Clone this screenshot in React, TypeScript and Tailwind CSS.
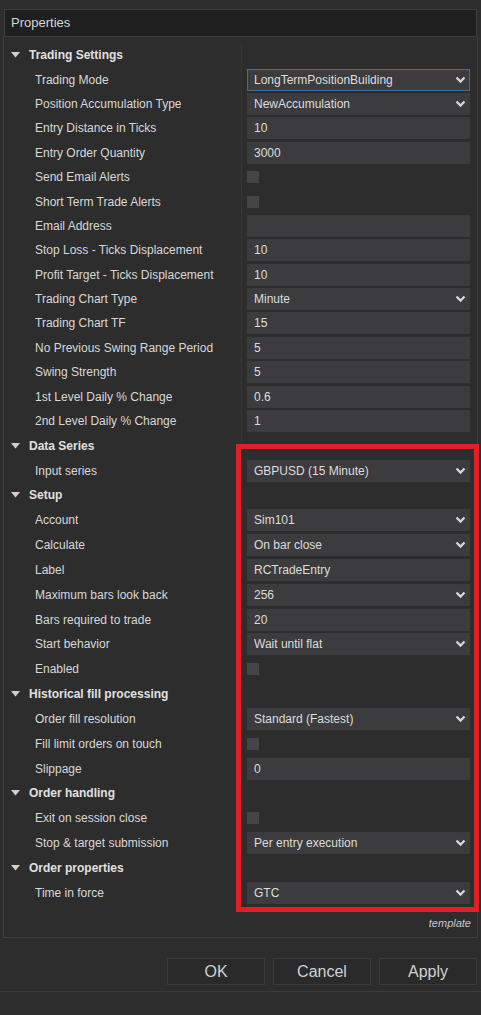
import React from "react";

type Row =
  | { kind: "section"; title: string }
  | { kind: "select"; label: string; value: string; focused?: boolean }
  | { kind: "text"; label: string; value: string }
  | { kind: "check"; label: string };

const rows: Row[] = [
  { kind: "section", title: "Trading Settings" },
  { kind: "select", label: "Trading Mode", value: "LongTermPositionBuilding", focused: true },
  { kind: "select", label: "Position Accumulation Type", value: "NewAccumulation" },
  { kind: "text", label: "Entry Distance in Ticks", value: "10" },
  { kind: "text", label: "Entry Order Quantity", value: "3000" },
  { kind: "check", label: "Send Email Alerts" },
  { kind: "check", label: "Short Term Trade Alerts" },
  { kind: "text", label: "Email Address", value: "" },
  { kind: "text", label: "Stop Loss - Ticks Displacement", value: "10" },
  { kind: "text", label: "Profit Target - Ticks Displacement", value: "10" },
  { kind: "select", label: "Trading Chart Type", value: "Minute" },
  { kind: "text", label: "Trading Chart TF", value: "15" },
  { kind: "text", label: "No Previous Swing Range Period", value: "5" },
  { kind: "text", label: "Swing Strength", value: "5" },
  { kind: "text", label: "1st Level Daily % Change", value: "0.6" },
  { kind: "text", label: "2nd Level Daily % Change", value: "1" },
  { kind: "section", title: "Data Series" },
  { kind: "select", label: "Input series", value: "GBPUSD (15 Minute)" },
  { kind: "section", title: "Setup" },
  { kind: "select", label: "Account", value: "Sim101" },
  { kind: "select", label: "Calculate", value: "On bar close" },
  { kind: "text", label: "Label", value: "RCTradeEntry" },
  { kind: "select", label: "Maximum bars look back", value: "256" },
  { kind: "text", label: "Bars required to trade", value: "20" },
  { kind: "select", label: "Start behavior", value: "Wait until flat" },
  { kind: "check", label: "Enabled" },
  { kind: "section", title: "Historical fill processing" },
  { kind: "select", label: "Order fill resolution", value: "Standard (Fastest)" },
  { kind: "check", label: "Fill limit orders on touch" },
  { kind: "text", label: "Slippage", value: "0" },
  { kind: "section", title: "Order handling" },
  { kind: "check", label: "Exit on session close" },
  { kind: "select", label: "Stop & target submission", value: "Per entry execution" },
  { kind: "section", title: "Order properties" },
  { kind: "select", label: "Time in force", value: "GTC" },
];

function Chevron() {
  return (
    <svg width="11" height="8" viewBox="0 0 11 8" className="shrink-0">
      <path d="M1.5 1.5 L5.5 5.5 L9.5 1.5" fill="none" stroke="#d6d6d6" strokeWidth="2.3" />
    </svg>
  );
}

function Caret() {
  return (
    <svg width="9" height="6" viewBox="0 0 9 6" className="shrink-0">
      <path d="M0 0 L9 0 L4.5 5.5 Z" fill="#cfcfcf" />
    </svg>
  );
}

function PropRow({ row, tight }: { row: Row; tight: boolean }) {
  const h = tight ? "h-[24.4px]" : "h-[24.85px]";
  if (row.kind === "section") {
    return (
      <div className={`flex ${h} items-center`}>
        <div className="flex w-[237px] items-center pl-[7px]">
          <Caret />
          <span className="ml-[9px] text-[12px] font-bold text-[#e0e0e0]">{row.title}</span>
        </div>
        <div className="h-full flex-1 border-l border-[#353535]" />
      </div>
    );
  }
  return (
    <div className={`flex ${h} items-center`}>
      <div className="w-[237px] pl-[31px] text-[12px] text-[#d8d8d8]">{row.label}</div>
      <div className="flex h-full flex-1 items-center border-l border-[#383838] pl-[5px] pr-[7px]">
        {row.kind === "check" ? (
          <div className="h-[12px] w-[12px] bg-[#454547]" />
        ) : (
          <div
            className={
              row.kind === "select" && row.focused
                ? "flex h-[22px] flex-1 items-center justify-between border border-[#3f6f9a] bg-[#3c3c3e] pl-[6px] pr-[3px]"
                : "flex h-[22px] flex-1 items-center justify-between bg-[#3c3c3e] pl-[7px] pr-[4px]"
            }
          >
            <span className="text-[12px] text-[#dcdcdc]">{row.value}</span>
            {row.kind === "select" && <Chevron />}
          </div>
        )}
      </div>
    </div>
  );
}

export default function App() {
  return (
    <div
      className="relative flex h-[1015px] w-[481px] flex-col bg-[#2d2d2d] pt-[9px]"
      style={{ fontFamily: '"Liberation Sans", Arial, sans-serif' }}
    >
      <div className="mx-[4px] flex h-[28px] items-center border border-[#3e3e3e] bg-[#1f1f1f] px-[6px] text-[13px] text-[#d6d6d6]">
        Properties
      </div>

      <div className="mx-[3px] flex flex-col border border-t-0 border-[#3e3e3e] pt-[6px]">
        {rows.map((r, i) => (
          <PropRow key={i} row={r} tight={i < 16} />
        ))}
        <div className="flex h-[32px] items-start justify-end pr-[6px] pt-[12px] text-[11px] leading-[12px] italic text-[#c8c8c8]">
          template
        </div>
      </div>

      <div className="mt-[20px] flex justify-end gap-[8px] pr-[4px]">
        {["OK", "Cancel", "Apply"].map((b) => (
          <div
            key={b}
            className="flex h-[27px] w-[98px] items-center justify-center border border-[#3a3a3a] bg-[#2a2a2a] text-[16px] text-[#d2d2d2]"
          >
            {b}
          </div>
        ))}
      </div>

      <div className="mt-[6px] flex-1 border-t border-[#3c3c3c] bg-[#2e2e2e]" />

      <div className="pointer-events-none absolute left-[236px] top-[444px] h-[468px] w-[243px] border-[5px] border-[#e21f27]" />
    </div>
  );
}
